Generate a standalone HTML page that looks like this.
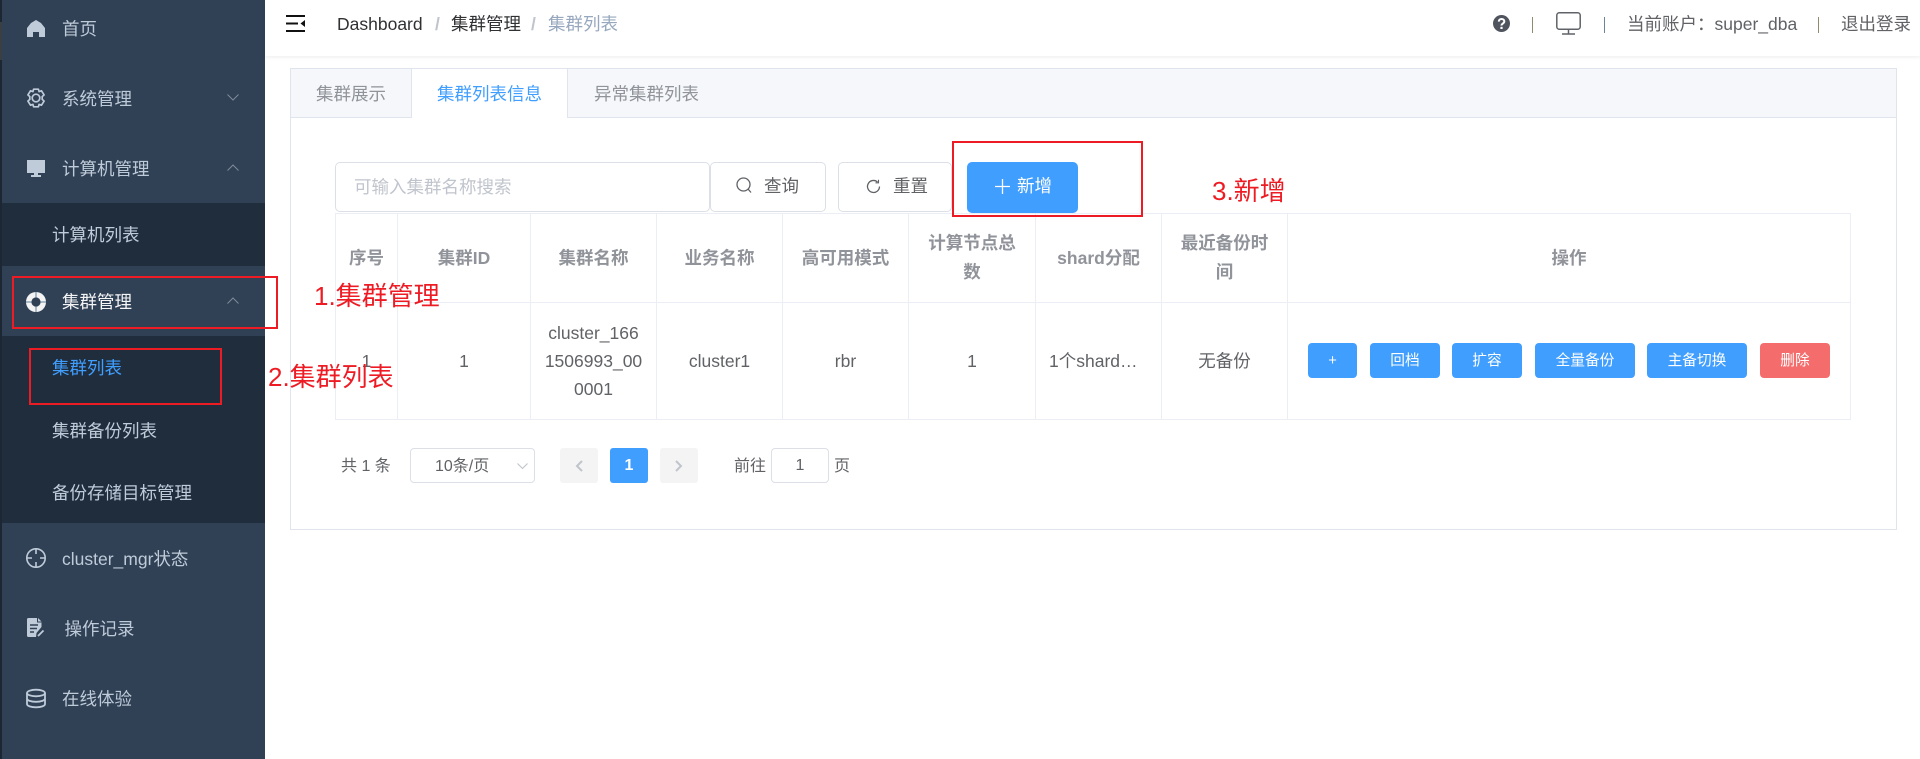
<!DOCTYPE html>
<html lang="zh-CN"><head><meta charset="utf-8"><title>集群列表</title>
<style>
*{box-sizing:border-box}
html,body{margin:0;padding:0;width:1920px;height:759px;overflow:hidden;background:#fff;font-family:"Liberation Sans","Noto Sans CJK SC",sans-serif;font-size:17.5px;color:#606266}
.a{position:absolute}
.t{position:absolute;white-space:nowrap;line-height:30px;height:30px}
.side{color:#bfcbd9}
svg{position:absolute;overflow:visible}
.box{position:absolute;border:1px solid #dcdfe6;border-radius:5px;background:#fff}
.red{position:absolute;border:2px solid #ed1c24}
.note{position:absolute;white-space:nowrap;color:#ed1c24;font-size:26px;line-height:36px;height:36px}
.btn{position:absolute;top:343px;height:35px;line-height:36px;text-align:center;color:#fff;background:#409eff;border-radius:4px;font-size:14.7px}
table{position:absolute;left:335px;top:213px;width:1515px;border-collapse:collapse;table-layout:fixed;background:transparent}
td,th{border:1px solid #ebeef5;padding:0 6px;text-align:center;font-size:17.5px;vertical-align:middle}
th{height:89px;color:#909399;font-weight:700;line-height:29px}
td{height:117px;color:#606266;font-weight:400;line-height:28.3px}
</style></head><body>

<!-- sidebar -->
<div class="a" style="left:0;top:0;width:265px;height:759px;background:#304156"></div>
<div class="a" style="left:0;top:0;width:2px;height:759px;background:#1c2733"></div>
<div class="a" style="left:0;top:22px;width:2px;height:38px;background:#3a3f42"></div>
<div class="a" style="left:2px;top:203px;width:263px;height:63px;background:#1f2d3d"></div>
<div class="a" style="left:2px;top:336px;width:263px;height:187px;background:#1f2d3d"></div>

<svg style="left:27px;top:20px" width="18" height="17" viewBox="0 0 18 17"><path fill="#bfcbd9" d="M9 0 L14 3 L18 8 V17 H12 V12 H6 V17 H0 V8 L4 3 Z"/></svg>
<div class="t side" style="left:62px;top:14px">首页</div>

<svg style="left:26px;top:88px" width="20" height="20" viewBox="0 0 20 20" fill="none" stroke="#bfcbd9" stroke-width="1.700"><path d="M7.600 1.200h4.800l.7 2.400 2.400-.8 2.600 4.100-1.900 1.700v2.800l1.900 1.700-2.600 4.100-2.400-.8-.7 2.400H7.600l-.7-2.400-2.400.8-2.600-4.100 1.900-1.700V8.600L1.900 6.900l2.600-4.100 2.400.8z" stroke-linejoin="round"/><circle cx="10" cy="10" r="3.800"/></svg>
<div class="t side" style="left:62px;top:84px">系统管理</div>
<svg style="left:227px;top:94px" width="12" height="7" viewBox="0 0 12 7" fill="none" stroke="#7f8b99" stroke-width="1"><path d="M.5.5 6 6l5.500-5.500"/></svg>

<svg style="left:27px;top:160px" width="18" height="17" viewBox="0 0 18 17"><path fill="#bfcbd9" d="M0 0h18v13H0z"/><path fill="#bfcbd9" d="M7 13h4v2h3v2H4v-2h3z"/></svg>
<div class="t side" style="left:62px;top:154px">计算机管理</div>
<svg style="left:227px;top:164px" width="12" height="7" viewBox="0 0 12 7" fill="none" stroke="#7f8b99" stroke-width="1"><path d="M.5 6.500 6 1l5.500 5.500"/></svg>

<div class="t side" style="left:52px;top:220px">计算机列表</div>

<svg style="left:26px;top:292px" width="20" height="20" viewBox="0 0 20 20"><circle cx="10" cy="10" r="10" fill="#f4f4f5"/><circle cx="10" cy="10" r="4.600" fill="#304156"/><path d="M0 10h5.500M14.500 10H20M10 0v5.500M10 14.500V20" stroke="#5f7f9a" stroke-width="1"/></svg>
<div class="t" style="left:62px;top:287px;color:#f4f4f5">集群管理</div>
<svg style="left:227px;top:297px" width="12" height="7" viewBox="0 0 12 7" fill="none" stroke="#7f8b99" stroke-width="1"><path d="M.5 6.500 6 1l5.500 5.500"/></svg>

<div class="t" style="left:52px;top:353px;color:#409eff">集群列表</div>
<div class="t side" style="left:52px;top:416px">集群备份列表</div>
<div class="t side" style="left:52px;top:478px">备份存储目标管理</div>

<svg style="left:26px;top:548px" width="20" height="20" viewBox="0 0 20 20" fill="none" stroke="#bfcbd9" stroke-width="1.600"><circle cx="10" cy="10" r="9.200"/><path d="M10 1v5M10 14v5M1 10h5M14 10h5"/></svg>
<div class="t side" style="left:62px;top:544px">cluster_mgr状态</div>

<svg style="left:27px;top:618px" width="18" height="19" viewBox="0 0 18 19"><path fill="#bfcbd9" d="M1.500 0H10v4.500h4.500V9L9.500 15 9 19H1.500Q0 19 0 17.500V1.500Q0 0 1.500 0Z"/><path fill="#bfcbd9" d="M11 0l3.500 3.500H11z"/><path d="M3 7h8M3 10.500h7M3 14h4" stroke="#304156" stroke-width="1.400"/><path d="M11 18l5.500-5.500" stroke="#bfcbd9" stroke-width="1.800"/></svg>
<div class="t side" style="left:64.500px;top:614px">操作记录</div>

<svg style="left:26px;top:689px" width="20" height="19" viewBox="0 0 20 19" fill="none" stroke="#bfcbd9" stroke-width="1.800"><ellipse cx="10" cy="4" rx="9" ry="3.300"/><path d="M1 4v11c0 2 4 3.300 9 3.300s9-1.300 9-3.300V4M1 9.500c0 2 4 3.300 9 3.300s9-1.300 9-3.300"/></svg>
<div class="t side" style="left:62px;top:684px">在线体验</div>

<!-- header -->
<div class="a" style="left:265px;top:0;width:1655px;height:56px;background:#fff;box-shadow:0 1px 4px rgba(0,21,41,.08)"></div>
<svg style="left:286px;top:15px" width="19" height="17" viewBox="0 0 19 17" fill="none" stroke="#111" stroke-width="2"><path d="M0 1h19M0 8.500h12M0 16h19"/><path d="M19 5v7L14.500 8.500z" fill="#111" stroke="none"/></svg>
<div class="t" style="left:337px;top:9px;color:#303133">Dashboard</div>
<div class="t" style="left:435px;top:9px;color:#c0c4cc;font-weight:700">/</div>
<div class="t" style="left:451px;top:9px;color:#303133">集群管理</div>
<div class="t" style="left:531px;top:9px;color:#c0c4cc;font-weight:700">/</div>
<div class="t" style="left:548px;top:9px;color:#97a8be">集群列表</div>

<svg style="left:1493px;top:15px" width="17" height="17" viewBox="0 0 17 17"><circle cx="8.500" cy="8.500" r="8.500" fill="#50545e"/><path d="M5.800 6.600C5.800 3.200 11.300 3.200 11.300 6.400 11.300 8.600 8.500 8.500 8.500 10.500" fill="none" stroke="#fff" stroke-width="2"/><rect x="7.400" y="11.800" width="2.200" height="2.200" fill="#fff"/></svg>
<div class="a" style="left:1532px;top:17px;width:1px;height:16px;background:#8f8a70"></div>
<svg style="left:1556px;top:12px" width="25" height="23" viewBox="0 0 25 23" fill="none" stroke="#5f6368" stroke-width="1.500"><rect x=".8" y=".8" width="23.400" height="16.400" rx="2.500"/><path d="M12.500 17v5M6 22h13"/></svg>
<div class="a" style="left:1604px;top:17px;width:1px;height:16px;background:#6f8398"></div>
<div class="t" style="left:1627px;top:9px;color:#606266">当前账户：super_dba</div>
<div class="a" style="left:1818px;top:17px;width:1px;height:16px;background:#8f8a70"></div>
<div class="t" style="left:1841px;top:9px;color:#606266">退出登录</div>

<!-- tabs -->
<div class="a" style="left:290px;top:68px;width:1607px;height:462px;border:1px solid #dfe4ed;background:#fff"></div>
<div class="a" style="left:291px;top:69px;width:1605px;height:49px;background:#f5f7fa;border-bottom:1px solid #dfe4ed"></div>
<div class="a" style="left:411px;top:69px;width:157px;height:49px;background:#fff;border-left:1px solid #dfe4ed;border-right:1px solid #dfe4ed"></div>
<div class="t" style="left:316px;top:79px;color:#909399">集群展示</div>
<div class="t" style="left:437px;top:79px;color:#409eff">集群列表信息</div>
<div class="t" style="left:594px;top:79px;color:#909399">异常集群列表</div>

<!-- toolbar -->
<div class="box" style="left:335px;top:162px;width:375px;height:50px"></div>
<div class="t" style="left:354px;top:172px;color:#c0c4cc">可输入集群名称搜索</div>
<div class="box" style="left:710px;top:162px;width:116px;height:50px"></div>
<svg style="left:736px;top:177px" width="16" height="17" viewBox="0 0 16 17" fill="none" stroke="#606266" stroke-width="1.300"><circle cx="7.500" cy="7.500" r="6.500"/><path d="M12 12l3 3.500"/></svg>
<div class="t" style="left:764px;top:171px;color:#606266">查询</div>
<div class="box" style="left:838px;top:162px;width:114px;height:50px"></div>
<svg style="left:866px;top:179px" width="15" height="15" viewBox="0 0 15 15" fill="none" stroke="#606266" stroke-width="1.300"><path d="M13.500 7.500A6 6 0 1 1 11.500 3"/><path d="M12.500.8v3h-3" stroke-width="1.100"/></svg>
<div class="t" style="left:893px;top:171px;color:#606266">重置</div>
<div class="a" style="left:967px;top:162px;width:111px;height:51px;background:#409eff;border-radius:5px"></div>
<svg style="left:995px;top:179px" width="15" height="15" viewBox="0 0 15 15" stroke="#fff" stroke-width="1.300"><path d="M7.500 0v15M0 7.500h15"/></svg>
<div class="t" style="left:1017px;top:171px;color:#fff">新增</div>

<!-- table -->
<table>
<colgroup><col style="width:62px"><col style="width:133px"><col style="width:126px"><col style="width:126px"><col style="width:126px"><col style="width:127px"><col style="width:126px"><col style="width:126px"><col style="width:563px"></colgroup>
<tr><th>序号</th><th>集群ID</th><th>集群名称</th><th>业务名称</th><th>高可用模式</th><th>计算节点总<br>数</th><th style="white-space:nowrap">shard分配</th><th>最近备份时<br>间</th><th>操作</th></tr>
<tr><td>1</td><td>1</td><td>cluster_166<br>1506993_00<br>0001</td><td>cluster1</td><td>rbr</td><td>1</td><td style="white-space:nowrap;text-align:left;padding-left:13px">1个shard…</td><td>无备份</td><td></td></tr>
</table>
<div class="btn" style="left:1308px;width:49px">+</div>
<div class="btn" style="left:1370px;width:70px">回档</div>
<div class="btn" style="left:1452px;width:70px">扩容</div>
<div class="btn" style="left:1535px;width:100px">全量备份</div>
<div class="btn" style="left:1647px;width:100px">主备切换</div>
<div class="btn" style="left:1760px;width:70px;background:#f56c6c">删除</div>

<!-- pagination -->
<div class="t" style="left:341px;top:452px;font-size:16px;color:#606266">共 1 条</div>
<div class="box" style="left:410px;top:448px;width:125px;height:35px;border-radius:4px"></div>
<div class="t" style="left:435px;top:452px;font-size:16px;color:#606266">10条/页</div>
<svg style="left:517px;top:463px" width="11" height="6" viewBox="0 0 11 6" fill="none" stroke="#c0c4cc" stroke-width="1.100"><path d="M.5.500l5 5 5-5"/></svg>
<div class="a" style="left:560px;top:448px;width:38px;height:35px;background:#f4f4f5;border-radius:3px"></div>
<svg style="left:575px;top:460px" width="8" height="12" viewBox="0 0 8 12" fill="none" stroke="#c0c4cc" stroke-width="2"><path d="M7 1 2 6l5 5"/></svg>
<div class="a" style="left:610px;top:448px;width:38px;height:35px;line-height:35px;text-align:center;background:#409eff;border-radius:3px;color:#fff;font-weight:700;font-size:16px">1</div>
<div class="a" style="left:660px;top:448px;width:38px;height:35px;background:#f4f4f5;border-radius:3px"></div>
<svg style="left:675px;top:460px" width="8" height="12" viewBox="0 0 8 12" fill="none" stroke="#c0c4cc" stroke-width="2"><path d="M1 1l5 5-5 5"/></svg>
<div class="t" style="left:734px;top:452px;font-size:16px;color:#606266">前往</div>
<div class="box" style="left:771px;top:448px;width:58px;height:35px;border-radius:4px;text-align:center;line-height:33px;font-size:16px;color:#606266">1</div>
<div class="t" style="left:834px;top:452px;font-size:16px;color:#606266">页</div>

<!-- annotations -->
<div class="red" style="left:12px;top:276px;width:266px;height:53px"></div>
<div class="red" style="left:29px;top:348px;width:193px;height:57px"></div>
<div class="red" style="left:952px;top:141px;width:191px;height:76px"></div>
<div class="note" style="left:314px;top:278px">1.集群管理</div>
<div class="note" style="left:268px;top:359px">2.集群列表</div>
<div class="note" style="left:1212px;top:173px">3.新增</div>
</body></html>
